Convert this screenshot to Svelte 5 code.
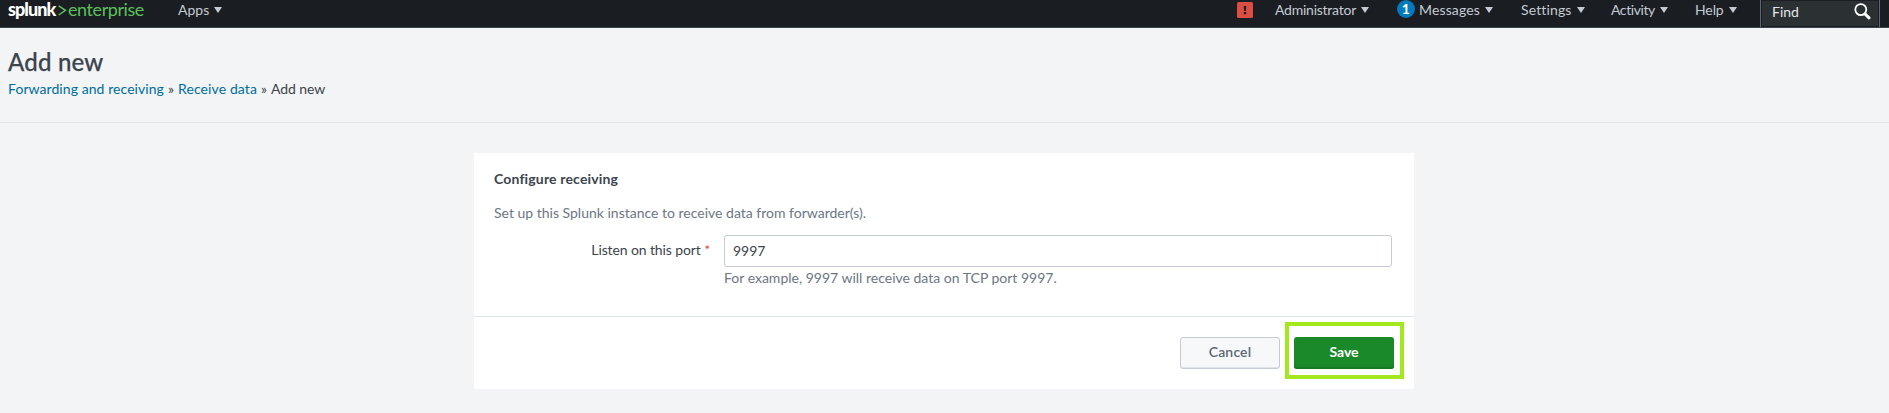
<script>
  const menus = [
    { label: 'Administrator', width: 145, spacing: -0.24 },
    { label: 'Messages', width: 101, spacing: 0.14, count: 1 },
    { label: 'Settings', width: 90, spacing: 0.13 },
    { label: 'Activity', width: 84, spacing: -0.42 },
    { label: 'Help', width: 65, spacing: -0.1 }
  ];
  let port = $state('9997');
</script>

{#snippet caret()}
  <svg class="caret" viewBox="0 0 8 6" width="8" height="6"><path d="M0 0h8L4 6z" /></svg>
{/snippet}

<header>
  <a class="logo" href="#home" aria-label="splunk enterprise">
    <b>splunk</b>
    <svg width="9" height="11" viewBox="0 0 9 11"><path d="M.7 .8 7.5 5.3.7 10" /></svg>
    <span>enterprise</span>
  </a>
  <button class="menu apps">Apps{@render caret()}</button>
  <svg class="alert" width="16" height="16" viewBox="0 0 16 16">
    <rect width="16" height="16" rx="1.5" fill="#dc4e41" />
    <path d="M6.7 4h2.6l-.5 5H7.2zM6.8 10.1h2.4v2.1H6.8z" fill="#1a1c20" />
  </svg>
  <nav>
    {#each menus as m}
      <button class="menu" style:width="{m.width}px" style:letter-spacing="{m.spacing}px">
        {#if m.count}<span class="count">{m.count}</span>{/if}{m.label}{@render caret()}
      </button>
    {/each}
  </nav>
  <div class="find">
    <span>Find</span>
    <svg width="17" height="17" viewBox="0 0 17 17">
      <circle cx="6.8" cy="6.6" r="5.5" />
      <path d="m11.2 11.2 3.8 3.6" class="handle" />
    </svg>
  </div>
</header>

<div class="title">
  <h1>Add new</h1>
  <div class="crumbs">
    <a href="#forwarding">Forwarding and receiving</a><i>»</i><a class="receive" href="#receive">Receive data</a><i>»</i><span>Add new</span>
  </div>
</div>

<main>
  <section class="body">
    <h2>Configure receiving</h2>
    <p class="intro">Set up this Splunk instance to receive data from forwarder(s).</p>
    <div class="row">
      <label for="port">Listen on this port <em>*</em></label>
      <div class="control">
        <input id="port" bind:value={port} />
        <p class="help">For example, 9997 will receive data on TCP port 9997.</p>
      </div>
    </div>
  </section>
  <footer>
    <button class="btn cancel">Cancel</button>
    <div class="highlight"><button class="btn save">Save</button></div>
  </footer>
</main>

<style>
  :global(body) {
    background: #f2f4f5;
    color: #3c444d;
    font: 14px/20px Lato, sans-serif;
    overflow: hidden;
  }
  * { box-sizing: border-box; }
  h1, h2, p { margin: 0; }
  a { color: #006d9c; text-decoration: none; }
  button, input { font: inherit; color: inherit; }

  header {
    display: flex;
    align-items: flex-start;
    height: 28px;
    background: #1a1d21;
    border-bottom: 1px solid #3c444d;
  }
  .logo {
    display: flex;
    width: 170px;
    padding-left: 8px;
    color: #5cc05c;
    font-size: 18px;
    line-height: 18px;
  }
  .logo b { width: 50px; color: #fff; font-weight: 900; letter-spacing: -0.95px; }
  .logo span { letter-spacing: -0.42px; }
  .logo svg { width: 9px; margin: 5px 1px 0 0; fill: none; stroke: #5cc05c; stroke-width: 1.5; }
  .menu {
    display: flex;
    align-items: center;
    height: 19px;
    padding: 0;
    border: 0;
    background: none;
    color: #c3cbd4;
    line-height: 19px;
    white-space: nowrap;
  }
  .apps { width: 60px; margin-left: 8px; }
  .caret { flex: none; margin-left: 5px; fill: #c3cbd4; }
  .alert { margin: 2px 0 0 auto; }
  nav { display: flex; margin-left: 22px; }
  .count {
    width: 18px;
    height: 18px;
    margin: -1px 4px 0 -23px;
    border-radius: 50%;
    background: #007abd;
    color: #fff;
    font-weight: 700;
    line-height: 18px;
    text-align: center;
  }
  .find {
    display: flex;
    justify-content: space-between;
    width: 120px;
    height: 27px;
    margin-right: 9px;
    padding: 3px 8px 0 11px;
    background: #2b3033;
    border: solid #5c6773;
    border-width: 0 1px;
    box-shadow: inset 0 0 0 1px #1a1d21;
    color: #e1e6eb;
  }
  .find span { margin-top: -1px; }
  .find svg { fill: none; stroke: #fff; stroke-width: 1.8; }
  .find .handle { stroke-width: 3; stroke-linecap: round; }

  .title { height: 95px; padding: 19px 8px 0; border-bottom: 1px solid #e1e6eb; }
  h1 { font-size: 24px; line-height: 30px; font-weight: 500; letter-spacing: 0.2px; -webkit-text-stroke: 0.25px; }
  .crumbs { display: flex; margin-top: 2px; letter-spacing: 0.07px; }
  .crumbs i { width: 14px; font-style: normal; text-align: center; }
  .crumbs .receive { letter-spacing: 0.11px; }
  .crumbs span { letter-spacing: -0.1px; }

  main {
    width: 940px;
    height: 236px;
    margin: 30px 0 0 474px;
    background: #fff;
    box-shadow: 0 1px #dfe5ea;
  }
  .body { height: 164px; padding: 16px 22px 0 20px; border-bottom: 1px solid #dfe5ea; }
  h2 { font-size: 14px; line-height: 20px; font-weight: 700; letter-spacing: 0.16px; }
  .intro { margin-top: 14px; color: #6b7785; }
  .row { display: flex; margin-top: 12px; }
  label { width: 230px; padding: 5px 14px 0 0; text-align: right; letter-spacing: -0.11px; }
  em { color: #dc4e41; font-style: normal; }
  .control { flex: 1; }
  input {
    display: block;
    width: 668px;
    height: 32px;
    padding: 0 8px 2px;
    border: 1px solid #c3cbd4;
    border-radius: 3px;
    background: #fff;
    outline: 0;
  }
  .help { margin-top: 1px; color: #6b7785; }

  footer { display: flex; justify-content: flex-end; padding: 5px 10px 0 0; }
  .btn {
    display: block;
    width: 100px;
    height: 32px;
    padding: 0 0 3px;
    border-radius: 3px;
    font-weight: 600;
  }
  .cancel {
    margin: 15px 5px 0 0;
    border: 1px solid #c3cbd4;
    background: #f7f8fa;
    box-shadow: inset 0 -1px #dfe4e9;
    color: #5c6773;
    letter-spacing: 0.15px;
  }
  .save {
    border: 0;
    background: #1a8929;
    box-shadow: inset 0 -2px #167a23;
    color: #fff;
    font-weight: 700;
  }
  .highlight { width: 119px; height: 57px; padding: 11px 5px; border: 4px solid #a2e81c; }
</style>
